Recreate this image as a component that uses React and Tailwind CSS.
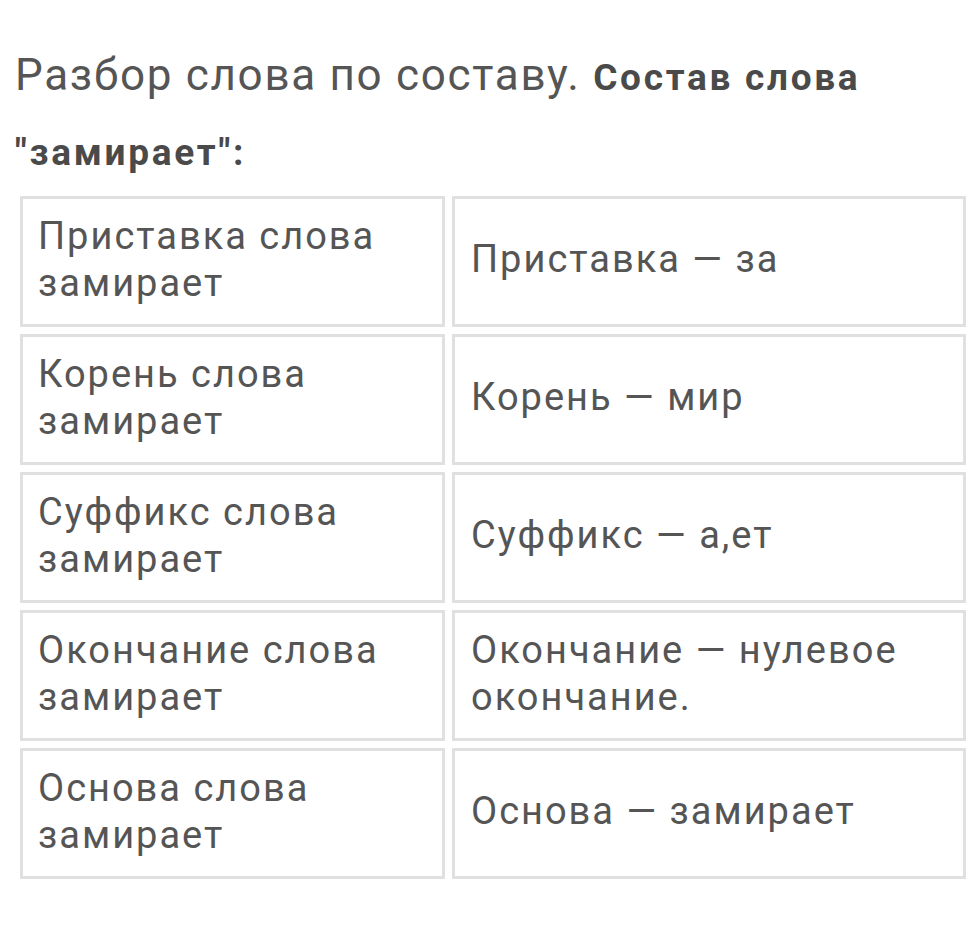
import React from "react";

const rows = [
  ["Приставка слова", "Приставка — за"],
  ["Корень слова", "Корень — мир"],
  ["Суффикс слова", "Суффикс — а,ет"],
  ["Окончание слова", "Окончание — нулевое окончание."],
  ["Основа слова", "Основа — замирает"],
];

export default function App() {
  return (
    <main
      className="w-[968px] h-[925px] bg-white overflow-hidden text-[#555]"
      style={{ fontFamily: "Roboto, 'Noto Sans', sans-serif" }}
    >
      <p className="pt-[39px] pl-[15px] pr-[40px] text-[44px] leading-[73px] tracking-[1.7px]">
        Разбор слова по составу.{" "}
        <strong className="font-bold text-[37px] tracking-[2.7px] text-[#4a4a4a]">
          Состав слова "замирает":
        </strong>
      </p>
      <div className="mt-[7px] ml-[20px] grid grid-cols-[425px_514px] gap-[7px]">
        {rows.map(([left, right]) => (
          <React.Fragment key={left}>
            <div className="h-[131px] border-[3px] border-[#e0e0e0] flex items-center pl-[15px] pr-[10px] pb-[4px] text-[38px] leading-[47px] tracking-[2px]">
              <span>
                {left}
                <br />
                замирает
              </span>
            </div>
            <div className="h-[131px] border-[3px] border-[#e0e0e0] flex items-center pl-[16px] pr-[20px] pb-[4px] text-[38px] leading-[47px] tracking-[2px]">
              <span>{right}</span>
            </div>
          </React.Fragment>
        ))}
      </div>
    </main>
  );
}
